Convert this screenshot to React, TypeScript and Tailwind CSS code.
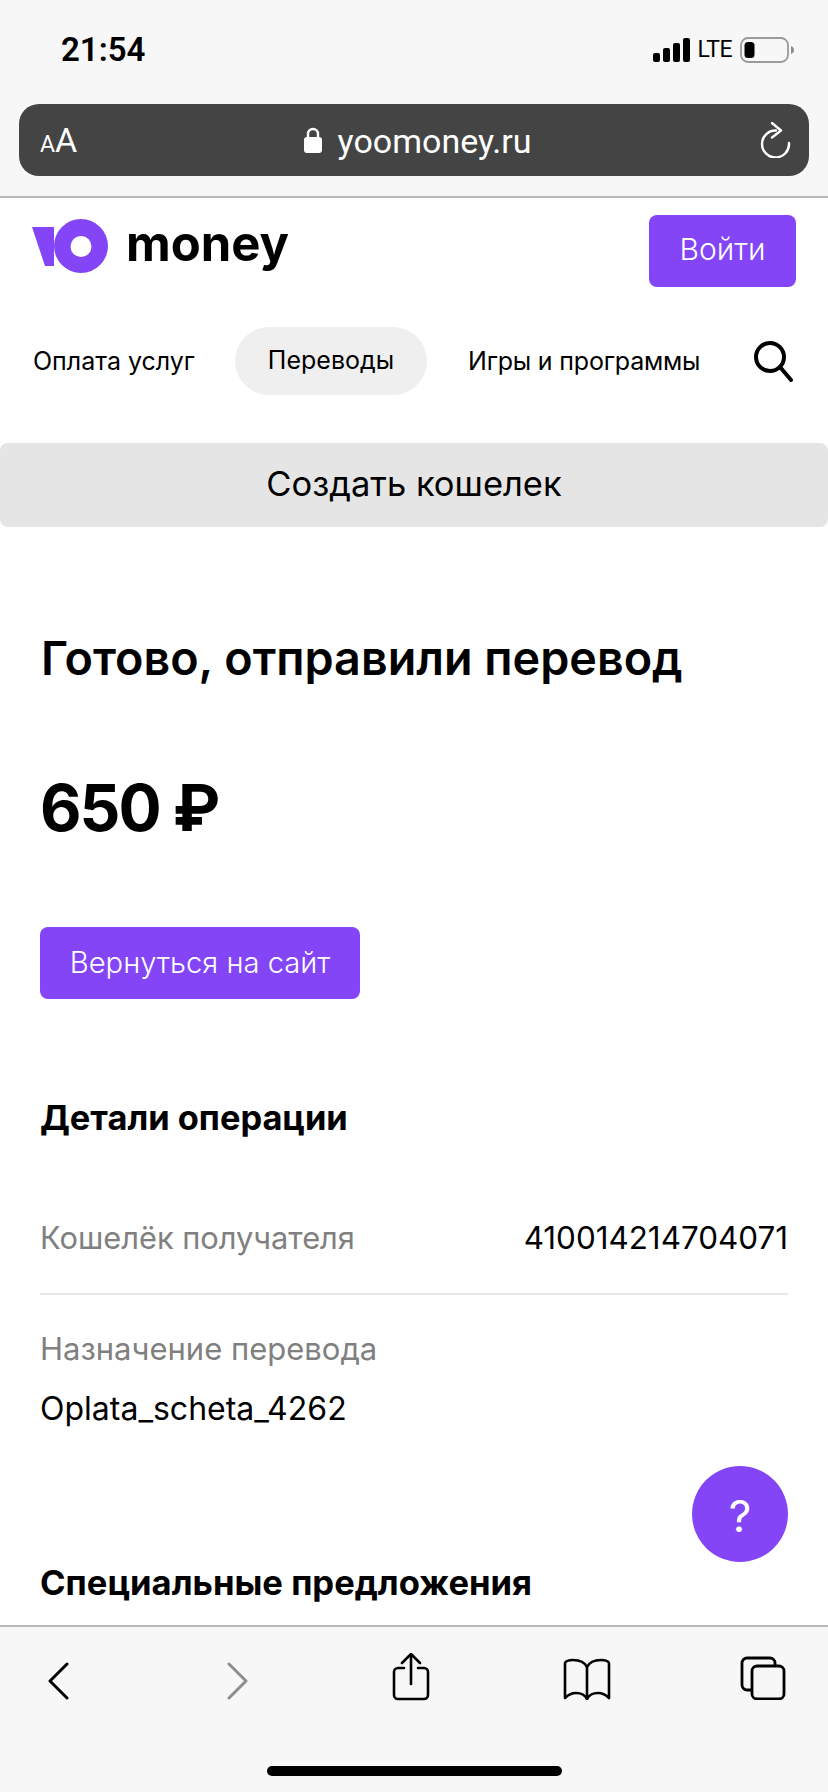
import React from 'react';

const Logo = () => (
  <svg width="78" height="56" viewBox="0 0 78 56" className="block shrink-0">
    <path d="M0 9h22v39h-9z" fill="#8345f5" />
    <path fillRule="evenodd" d="M49 1a27 27 0 1 0 0 54 27 27 0 0 0 0-54zm0 17a10.500 10.500 0 1 1 0 21 10.500 10.500 0 0 1 0-21z" fill="#8345f5" />
  </svg>
);

const Signal = () => (
  <svg width="38" height="24" viewBox="0 0 38 24" className="block">
    <rect x="0" y="15" width="7" height="9" rx="2" />
    <rect x="10" y="10" width="7" height="14" rx="2" />
    <rect x="20" y="5" width="7" height="19" rx="2" />
    <rect x="30" y="0" width="7" height="24" rx="2" />
  </svg>
);

const Battery = () => (
  <svg width="54" height="26" viewBox="0 0 54 26" className="block">
    <rect x="1" y="1" width="47" height="24" rx="7" fill="none" stroke="#9a9a9a" strokeWidth="1.800" />
    <rect x="4.500" y="5" width="10" height="16" rx="3.500" fill="#000" />
    <path d="M51 9c2 1 3 2 3 4s-1 3-3 4z" fill="#8e8e8e" />
  </svg>
);

const Lock = () => (
  <svg width="18" height="26" viewBox="0 0 18 26" className="block">
    <path d="M4 11V7a5 5 0 0 1 10 0v4" fill="none" stroke="#fff" strokeWidth="2.400" />
    <rect x="0" y="10" width="18" height="16" rx="3" fill="#fff" />
  </svg>
);

const Reload = () => (
  <svg width="32" height="36" viewBox="0 0 32 36" fill="none" stroke="#fff" strokeWidth="2.400" strokeLinecap="round" strokeLinejoin="round" className="block">
    <path d="M17 8.500A13.500 13.500 0 1 0 30 21" />
    <path d="M13 1l9 7.500-9 7" />
  </svg>
);

const Search = () => (
  <svg width="42" height="42" viewBox="0 0 42 42" fill="none" stroke="#000" strokeWidth="4" strokeLinecap="round" className="block">
    <circle cx="18" cy="17" r="14" />
    <path d="M28 27l11 13" />
  </svg>
);

const Back = () => (
  <svg width="21" height="38" viewBox="0 0 21 38" fill="none" stroke="#000" strokeWidth="3" strokeLinecap="round" strokeLinejoin="round" className="block">
    <path d="M19 2L2 19l17 17" />
  </svg>
);

const Forward = () => (
  <svg width="21" height="38" viewBox="0 0 21 38" fill="none" stroke="#8e8e8e" strokeWidth="3" strokeLinecap="round" strokeLinejoin="round" className="block">
    <path d="M2 2l17 17L2 36" />
  </svg>
);

const Share = () => (
  <svg width="38" height="48" viewBox="0 0 38 48" fill="none" stroke="#000" strokeWidth="2.600" strokeLinecap="round" strokeLinejoin="round" className="block">
    <path d="M12 15H6a4 4 0 0 0-4 4v23a4 4 0 0 0 4 4h26a4 4 0 0 0 4-4V19a4 4 0 0 0-4-4h-6" />
    <path d="M19 31V2" />
    <path d="M10 10l9-9 9 9" />
  </svg>
);

const Book = () => (
  <svg width="48" height="42" viewBox="0 0 48 42" fill="none" stroke="#000" strokeWidth="2.600" strokeLinecap="round" strokeLinejoin="round" className="block">
    <path d="M24 9C21 3 15 2 10 2 6 2 3 3 2 5v35c4-4 7-5 11-5 5 0 9 2 11 6 2-4 6-6 11-6 4 0 7 1 11 5V5c-1-2-4-3-8-3-5 0-11 1-14 7z" />
    <path d="M24 9v32" />
  </svg>
);

const Tabs = () => (
  <svg width="46" height="44" viewBox="0 0 46 44" fill="none" stroke="#000" strokeWidth="2.800" strokeLinejoin="round" className="block">
    <rect x="12" y="10" width="32" height="33" rx="5" />
    <path d="M12 34H7a5 5 0 0 1-5-5V7a5 5 0 0 1 5-5h23a5 5 0 0 1 5 5v3" />
  </svg>
);

const App: React.FC = () => {
  return (
    <div className="relative w-[828px] h-[1792px] overflow-hidden flex flex-col bg-white text-black font-['Inter','Noto_Sans',sans-serif]">
      {/* Safari top */}
      <div className="h-[198px] shrink-0 bg-[#f7f7f7] border-b-[2px] border-[#b8b8b8] px-[19px]">
        <div className="h-[104px] flex items-start justify-between pl-[42px] pr-[15px] pt-[30px]">
          <span className="text-[33px] leading-[40px] font-semibold font-['Roboto',sans-serif]">21:54</span>
          <div className="flex items-center pt-[7px]">
            <Signal />
            <span className="ml-[6px] mr-[8px] text-[23px] leading-[26px] tracking-[-0.5px] font-['Roboto',sans-serif]">LTE</span>
            <Battery />
          </div>
        </div>
        <div className="h-[72px] rounded-[20px] bg-[#444444] flex items-center justify-between pl-[21px] pr-[18px] text-white">
          <span className="flex items-baseline font-['Roboto',sans-serif]">
            <span className="text-[23px]">A</span>
            <span className="text-[34px]">A</span>
          </span>
          <div className="flex items-center gap-[16px] mr-[1px]">
            <Lock />
            <span className="text-[34px] leading-[42px] pt-[1px] font-['Roboto',sans-serif]">yoomoney.ru</span>
          </div>
          <Reload />
        </div>
      </div>

      {/* Page */}
      <main className="flex-1 overflow-hidden">
        <div className="h-[114px] flex items-start justify-between pl-[32px] pr-[32px] pt-[17px]">
          <div className="flex items-start mt-[3px]">
            <Logo />
            <span className="ml-[16px] mt-[-2px] text-[49px] leading-[56px] font-bold">money</span>
          </div>
          <button className="w-[147px] h-[72px] rounded-[8px] bg-[#8345f5] text-white text-[30px] font-light pb-[3px]">Войти</button>
        </div>
        <div className="h-[131px] flex items-start pl-[33px] pt-[15px]">
          <span className="mt-[15px] text-[25px] leading-[38px] w-[202px]">Оплата услуг</span>
          <span className="w-[192px] h-[68px] rounded-[34px] bg-[#efefef] flex items-center justify-center text-[25px]">Переводы</span>
          <span className="mt-[15px] ml-[41px] w-[284px] text-[25px] leading-[38px] tracking-[-0.2px] whitespace-nowrap">Игры и программы</span>
          <span className="mt-[13px]"><Search /></span>
        </div>
        <div className="h-[84px] rounded-[8px] bg-[#e5e5e5] flex items-center justify-center pb-[3px] text-[34.5px]">Создать кошелек</div>

        <div className="px-[40px]">
          <h1 className="mt-[100px] pl-[1px] text-[46.7px] leading-[62px] font-semibold whitespace-nowrap">Готово, отправили перевод</h1>
          <div className="mt-[79px] text-[64px] leading-[80px] font-bold tracking-[-2px]">650 ₽</div>
          <button className="mt-[79px] w-[320px] h-[72px] rounded-[8px] bg-[#8345f5] text-white text-[29.2px] font-light">Вернуться на сайт</button>
          <h2 className="mt-[95px] text-[34.4px] leading-[48px] font-bold">Детали операции</h2>
          <div className="mt-[68px] flex justify-between items-start h-[85px] border-b-[2px] border-[#e8e8e8]">
            <span className="text-[30.8px] leading-[56px] text-[#808080]">Кошелёк получателя</span>
            <span className="text-[31.4px] leading-[56px]">410014214704071</span>
          </div>
          <div className="mt-[32px] text-[31px] leading-[44px] text-[#808080]">Назначение перевода</div>
          <div className="mt-[16px] text-[32px] leading-[44px]">Oplata_scheta_4262</div>
          <h2 className="mt-[127px] text-[34.6px] leading-[48px] font-bold whitespace-nowrap">Специальные предложения</h2>
        </div>
      </main>

      {/* help button floats over the page */}
      <div className="absolute left-[692px] top-[1466px] w-[96px] h-[96px] rounded-full bg-[#8345f5] text-white text-[44px] font-normal pt-[3px] flex items-center justify-center">?</div>

      {/* Safari bottom */}
      <div className="h-[167px] shrink-0 bg-[#f7f7f7] border-t-[2px] border-[#b8b8b8] relative">
        <div className="h-[139px] flex items-start pt-[26px]">
          <div className="ml-[48px] mt-[9px]"><Back /></div>
          <div className="ml-[158px] mt-[9px]"><Forward /></div>
          <div className="ml-[144px]"><Share /></div>
          <div className="ml-[133px] mt-[5px]"><Book /></div>
          <div className="ml-[129px] mt-[3px]"><Tabs /></div>
        </div>
        <div className="w-[295px] h-[10px] rounded-full bg-black ml-[267px]" />
      </div>
    </div>
  );
};

export default App;
